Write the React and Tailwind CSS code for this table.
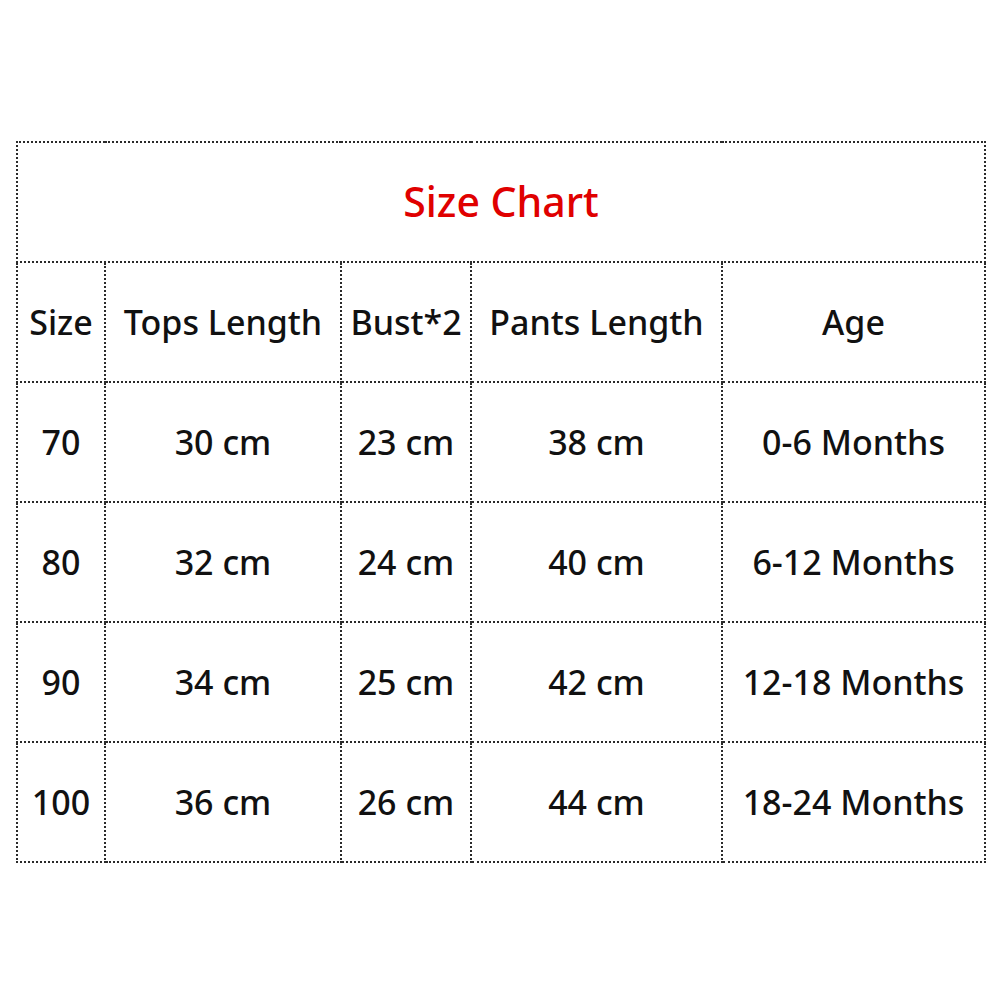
const rows = [
  ['70', '30 cm', '23 cm', '38 cm', '0-6 Months'],
  ['80', '32 cm', '24 cm', '40 cm', '6-12 Months'],
  ['90', '34 cm', '25 cm', '42 cm', '12-18 Months'],
  ['100', '36 cm', '26 cm', '44 cm', '18-24 Months'],
];

const cell = 'border-2 border-dotted border-[#2a2a2a] text-center align-middle p-0';

export default function App() {
  return (
    <div className="w-[1000px] h-[1000px] bg-white pt-[141px] pl-[16px]" style={{ fontFamily: '"Noto Sans", "Open Sans", sans-serif' }}>
      <table className="border-collapse table-fixed w-[968px] text-[#111] text-[34px] font-medium">
        <colgroup>
          <col className="w-[88px]" />
          <col className="w-[236px]" />
          <col className="w-[130px]" />
          <col className="w-[251px]" />
          <col className="w-[263px]" />
        </colgroup>
        <tbody>
          <tr className="h-[120px]">
            <td colSpan={5} className={`${cell} text-[#e00000] text-[41px]`}>Size Chart</td>
          </tr>
          <tr className="h-[120px]">
            {['Size', 'Tops Length', 'Bust*2', 'Pants Length', 'Age'].map((h) => (
              <td key={h} className={`${cell} whitespace-nowrap`}>{h}</td>
            ))}
          </tr>
          {rows.map((r) => (
            <tr key={r[0]} className="h-[120px]">
              {r.map((v, i) => (
                <td key={i} className={`${cell} whitespace-nowrap`}>{v}</td>
              ))}
            </tr>
          ))}
        </tbody>
      </table>
    </div>
  );
}
